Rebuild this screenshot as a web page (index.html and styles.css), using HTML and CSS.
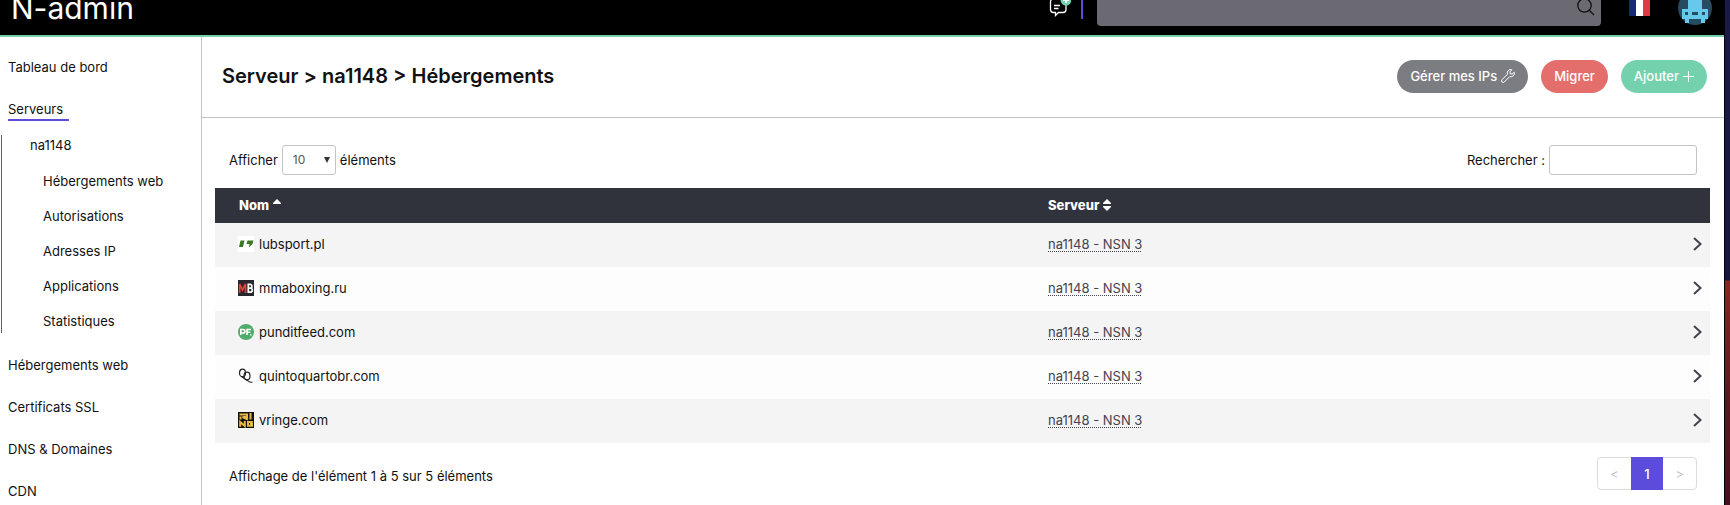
FILE: index.html
```html
<!DOCTYPE html>
<html lang="fr">
<head>
    <meta charset="UTF-8">
    <meta name="viewport" content="width=device-width, initial-scale=1.0">
    <title>N-admin - Hébergements</title>
    <link rel="stylesheet" href="styles.css">
</head>
<body>
<div class="window">
    <header class="topbar">
        <a class="brand" href="#">N-admin</a>
        <div class="topbar-tools">
            <button class="chat" aria-label="Messages">
                <svg width="22" height="24" viewBox="0 0 22 24" fill="none" stroke="#fff" stroke-width="1.3">
                    <path d="M14 3H4.500Q1.500 3 1.500 6V13.500Q1.500 16.500 4.500 16.500H6.500V19.500L9.500 16.500H14Q17 16.500 17 13.500V9M5 9.500H11M5 12.500H9.500"/>
                    <circle cx="17" cy="4" r="5.500" fill="#74d1ae" stroke="none"/>
                    <path stroke-width="1.8" d="M17 1V7M14 4H20"/>
                </svg>
            </button>
            <span class="divider"></span>
            <form class="search">
                <input type="text" aria-label="Recherche globale">
                <svg width="18" height="18" viewBox="0 0 18 18" fill="none" stroke="#111" stroke-width="1.3">
                    <circle cx="7.500" cy="7.500" r="6.700"/>
                    <path d="M12.300 12.300L17 17"/>
                </svg>
            </form>
            <button class="flag" aria-label="Français">
                <svg width="21" height="16" viewBox="0 0 21 16">
                    <rect width="7" height="16" fill="#12297c"/>
                    <rect x="7" width="7" height="16" fill="#fff"/>
                    <rect x="14" width="7" height="16" fill="#e2393f"/>
                </svg>
            </button>
            <button class="avatar" aria-label="Mon compte">
                <svg width="34" height="34" viewBox="0 0 34 34">
                    <circle cx="17" cy="17" r="17" fill="#264a5f"/>
                    <path fill="#66c8ea" d="M10 4H24V18H30V28H27V32H23V28H11V32H7V28H4V18H10Z"/>
                    <path fill="#264a5f" d="M7 21H10V24H7ZM14 21H20V24H14ZM24 21H27V24H24Z"/>
                </svg>
            </button>
        </div>
    </header>

    <div class="layout">
        <nav class="sidebar">
            <a href="#">Tableau de bord</a>
            <a class="active" href="#">Serveurs</a>
            <div class="submenu">
                <a class="server" href="#">na1148</a>
                <a href="#">Hébergements web</a>
                <a href="#">Autorisations</a>
                <a href="#">Adresses IP</a>
                <a href="#">Applications</a>
                <a href="#">Statistiques</a>
            </div>
            <a href="#">Hébergements web</a>
            <a href="#">Certificats SSL</a>
            <a href="#">DNS &amp; Domaines</a>
            <a href="#">CDN</a>
        </nav>

        <main class="content">
            <div class="page-head">
                <h1>Serveur &gt; na1148 &gt; Hébergements</h1>
                <div class="actions">
                    <button class="btn btn-grey">Gérer mes IPs
                        <svg width="14" height="14" viewBox="0 0 14 14" fill="none" stroke="#fff">
                            <path d="M10.800 .8A3.400 3.400 0 0 0 6.500 5.200L1 10.700A1.500 1.500 0 0 0 3.300 13L8.800 7.500A3.400 3.400 0 0 0 13.200 3.200L11.200 5L9.200 4.800L9 2.800Z"/>
                        </svg>
                    </button>
                    <button class="btn btn-red">Migrer</button>
                    <button class="btn btn-green">Ajouter
                        <svg width="11" height="11" viewBox="0 0 11 11" stroke="#fff">
                            <path d="M5.500 0V11M0 5.500H11"/>
                        </svg>
                    </button>
                </div>
            </div>

            <div class="panel">
                <div class="filters">
                    <div class="field">
                        <label for="length">Afficher</label>
                        <span class="select-wrap">
                            <select id="length">
                                <option>10</option>
                                <option>25</option>
                                <option>50</option>
                            </select>
                        </span>
                        <label for="length">éléments</label>
                    </div>
                    <div class="field">
                        <label for="filter">Rechercher :</label>
                        <input type="text" id="filter">
                    </div>
                </div>

                <table>
                    <thead>
                        <tr>
                            <th class="col-name">Nom
                                <svg width="8" height="12" viewBox="0 0 8 12" fill="#fff"><path d="M4 0L8 4V5H0V4Z"/></svg>
                            </th>
                            <th>Serveur
                                <svg width="8" height="12" viewBox="0 0 8 12" fill="#fff"><path d="M4 0L8 4V5H0V4ZM0 7H8V8L4 12L0 8Z"/></svg>
                            </th>
                            <th class="col-go"></th>
                        </tr>
                    </thead>
                    <tbody>
                        <tr>
                            <td><div class="site">
                                <svg width="16" height="16" viewBox="0 0 16 16">
                                    <rect width="16" height="16" fill="#fff"/>
                                    <path fill="#3b7a22" d="M2.500 4.500H6.500L5 11H1ZM9.500 4.500H15.500L14.500 8L11 11.500L11.500 8H8.500Z"/>
                                </svg>lubsport.pl</div></td>
                            <td><a href="#">na1148 - NSN 3</a></td>
                            <td class="col-go"><svg width="9" height="14" viewBox="0 0 9 14"><path d="M1 1L7.500 7L1 13"/></svg></td>
                        </tr>
                        <tr>
                            <td><div class="site">
                                <svg width="16" height="16" viewBox="0 0 16 16">
                                    <rect width="16" height="16" fill="#26282b"/>
                                    <path fill="none" stroke="#e0413c" stroke-width="1.700" d="M1.700 13V4L4.500 10L7.500 4V13"/>
                                    <path fill="none" stroke="#fff" stroke-width="1.700" d="M10.300 4.300V12.200H12.200C15 12.200 15 8.200 12.500 8.200H10.500H12.200C14.500 8.200 14.500 4.300 12.200 4.300Z"/>
                                </svg>mmaboxing.ru</div></td>
                            <td><a href="#">na1148 - NSN 3</a></td>
                            <td class="col-go"><svg width="9" height="14" viewBox="0 0 9 14"><path d="M1 1L7.500 7L1 13"/></svg></td>
                        </tr>
                        <tr>
                            <td><div class="site">
                                <svg width="16" height="16" viewBox="0 0 16 16">
                                    <circle cx="8" cy="8" r="8" fill="#4fac6a"/>
                                    <path fill="none" stroke="#fff" stroke-width="1.600" d="M2.800 11V5.500H5C7.600 5.500 7.600 9 5 9H3M9 11V5.500H13M9 8.300H12.300"/>
                                    <rect x="12" y="10" width="1.500" height="1.500" fill="#fff"/>
                                </svg>punditfeed.com</div></td>
                            <td><a href="#">na1148 - NSN 3</a></td>
                            <td class="col-go"><svg width="9" height="14" viewBox="0 0 9 14"><path d="M1 1L7.500 7L1 13"/></svg></td>
                        </tr>
                        <tr>
                            <td><div class="site">
                                <svg width="16" height="16" viewBox="0 0 16 16" fill="none" stroke="#222" stroke-width="1.2">
                                    <ellipse cx="4.500" cy="5" rx="3" ry="3.800"/>
                                    <ellipse cx="9" cy="8" rx="3" ry="3.800"/>
                                    <path d="M3.500 9C5 8.500 6 11 8 11.500M7.500 12C9.500 11 11 15.500 14.500 14"/>
                                </svg>quintoquartobr.com</div></td>
                            <td><a href="#">na1148 - NSN 3</a></td>
                            <td class="col-go"><svg width="9" height="14" viewBox="0 0 9 14"><path d="M1 1L7.500 7L1 13"/></svg></td>
                        </tr>
                        <tr>
                            <td><div class="site">
                                <svg width="16" height="16" viewBox="0 0 16 16">
                                    <rect width="16" height="16" fill="#15120c"/>
                                    <path fill="none" stroke="#e9b949" stroke-width="2" d="M1.500 2.500H9V5H4.500L10 7.500M2.500 4.500V7.500M12.500 1V7.500M2.200 14.800V10L6.800 14V9M14.800 10H10V13.800H14V12H12"/>
                                </svg>vringe.com</div></td>
                            <td><a href="#">na1148 - NSN 3</a></td>
                            <td class="col-go"><svg width="9" height="14" viewBox="0 0 9 14"><path d="M1 1L7.500 7L1 13"/></svg></td>
                        </tr>
                    </tbody>
                </table>

                <div class="table-foot">
                    <p>Affichage de l'élément 1 à 5 sur 5 éléments</p>
                    <div class="pagination">
                        <button disabled>&lt;</button>
                        <button class="current">1</button>
                        <button disabled>&gt;</button>
                    </div>
                </div>
            </div>
        </main>
    </div>
</div>
</body>
</html>
```
FILE: styles.css
```css
* {
    box-sizing: border-box;
}

body {
    margin: 0;
    height: 100vh;
    overflow: hidden;
    padding-right: 5px;
    background: linear-gradient(#1a1a48 0, #17173c 280px, #8a2622 281px, #5c161d 400px, #470f20 100%);
    font-family: Inter, "Liberation Sans", sans-serif;
    font-size: 13px;
    line-height: 20px;
    color: #111;
}

a {
    color: inherit;
    text-decoration: none;
}

button,
input,
select {
    font: inherit;
}

.window {
    height: 100vh;
    overflow: hidden;
    background: #fff;
    border-right: 1px solid #000;
}

/* top bar, scrolled partly out of view */
.topbar {
    display: flex;
    align-items: center;
    justify-content: space-between;
    height: 56px;
    margin-top: -19px;
    padding: 0 12px 0 11px;
    background: #000;
    border-bottom: 2px solid #74d1ae;
}

.brand {
    color: #fff;
    font-size: 30px;
    line-height: 36px;
}

.topbar-tools {
    display: flex;
    align-items: center;
}

.topbar-tools button {
    display: flex;
    padding: 0;
    border: none;
    background: none;
}

.divider {
    width: 2px;
    height: 22px;
    margin: 0 14px 0 10px;
    background: #5b4cdb;
}

.search {
    position: relative;
    width: 504px;
}

.search input {
    display: block;
    width: 100%;
    height: 36px;
    border: none;
    border-radius: 4px;
    background: #6b6971;
}

.search svg {
    position: absolute;
    right: 6px;
    top: 8px;
}

.flag {
    margin: 0 28px;
}

.layout {
    display: flex;
    min-height: 100vh;
}

.sidebar {
    display: flex;
    flex-direction: column;
    align-items: flex-start;
    flex: 0 0 202px;
    gap: 22px;
    padding: 20px 0 0 8px;
    border-right: 1px solid #c4c4c4;
}

.sidebar .active {
    width: 61px;
    height: 22px;
    margin-bottom: -8px;
    border-bottom: 2px solid #5b4cdb;
}

.submenu {
    display: flex;
    flex-direction: column;
    gap: 15px;
    margin: 0 0 0 -7px;
    padding: 0 0 2px 41px;
    border-left: 1px solid #5b4cdb;
}

.submenu .server {
    margin: 0 0 1px -13px;
}

.content {
    flex: 1;
}

.page-head {
    display: flex;
    align-items: center;
    justify-content: space-between;
    height: 81px;
    padding: 0 17px 2px 20px;
    border-bottom: 1px solid #c4c4c4;
}

h1 {
    margin: 0;
    font-size: 20px;
    font-weight: 600;
    font-optical-sizing: none;
    line-height: 24px;
}

.actions {
    display: flex;
    gap: 13px;
}

.btn {
    display: flex;
    align-items: center;
    gap: 4px;
    height: 33px;
    padding: 0 13px;
    border: none;
    border-radius: 17px;
    color: #fff;
    font-weight: 500;
}

.btn-grey { background: #7c7c83; }
.btn-red { background: #e46e6b; }
.btn-green { background: #74d1ae; }

.panel {
    padding: 27px 14px 0 13px;
}

.filters,
.table-foot {
    display: flex;
    align-items: center;
    justify-content: space-between;
    padding: 0 13px 0 14px;
}

.filters {
    margin-bottom: 13px;
}

.field {
    display: flex;
    align-items: center;
    gap: 4px;
}

.field input,
.field select {
    height: 30px;
    border: 1px solid #c4c4c4;
    border-radius: 3px;
    background: #fff;
}

.field input {
    width: 148px;
}

.select-wrap {
    position: relative;
}

.field select {
    display: block;
    width: 54px;
    padding: 0 10px;
    appearance: none;
    color: #555;
    font-size: 12px;
}

.select-wrap::after {
    content: "";
    position: absolute;
    right: 6px;
    top: 12px;
    border: 3px solid transparent;
    border-top: 6px solid #30323c;
    border-bottom: none;
    pointer-events: none;
}

table {
    width: 100%;
    border-collapse: collapse;
    table-layout: fixed;
}

th {
    height: 35px;
    padding: 0 0 1px 24px;
    background: #30323c;
    color: #fff;
    font-weight: 800;
    text-align: left;
}

th svg {
    margin-left: 1px;
    vertical-align: -1px;
}

.col-name {
    width: 809px;
}

td {
    height: 44px;
    padding: 0 0 2px 24px;
}

td .site {
    margin-left: -1px;
}

tbody tr:nth-child(odd) {
    background: #f4f4f4;
}

tbody tr:nth-child(even) {
    background: #fdfdfd;
}

td a {
    color: #45424f;
    text-decoration: underline dotted 1px;
    text-decoration-skip-ink: none;
    text-underline-offset: 2px;
}

.site {
    display: flex;
    align-items: center;
    gap: 5px;
}

.col-go {
    width: 60px;
    padding: 0 8px 2px 0;
    text-align: right;
}

.col-go svg {
    display: block;
    margin-left: auto;
    fill: none;
    stroke: #45424f;
    stroke-width: 2;
}

.table-foot {
    padding-top: 14px;
}

.table-foot p {
    margin: 5px 0 0;
}

.pagination {
    display: flex;
    width: 100px;
    height: 33px;
    border: 1px solid #dcdcdc;
    border-radius: 4px;
}

.pagination button {
    flex: 1;
    padding: 0;
    border: none;
    background: none;
    color: #c4c4c8;
}

.pagination .current {
    margin: -1px 0;
    background: #5b4cdb;
    color: #fff;
    font-weight: 500;
}
```
